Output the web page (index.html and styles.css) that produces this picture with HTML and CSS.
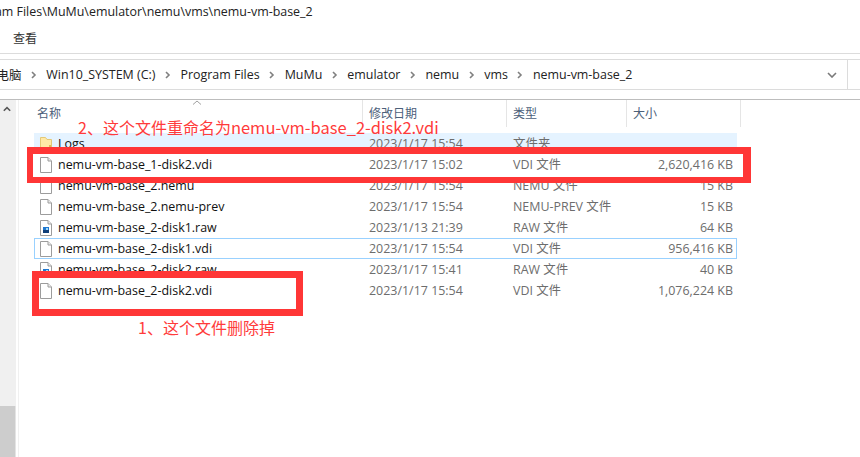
FILE: index.html
```html
<!DOCTYPE html>
<html lang="zh">
<head>
<meta charset="utf-8">
<title>nemu-vm-base_2</title>
<link rel="stylesheet" href="styles.css">
</head>
<body>
<svg class="defs" width="0" height="0">
  <defs>
    <symbol id="file" viewBox="0 0 12 16">
      <path d="M.5.5h7.500l3.500 3.500v11.500H.5z" fill="#fff" stroke="#9c9c9c"/>
      <path d="M8 .5v3.500h3.500" fill="#ececec" stroke="#9c9c9c"/>
    </symbol>
    <symbol id="raw" viewBox="0 0 12 16">
      <path d="M.5.5h7.500l3.500 3.500v11.500H.5z" fill="#fff" stroke="#9c9c9c"/>
      <path d="M8 .5v3.500h3.500" fill="#ececec" stroke="#9c9c9c"/>
      <rect x="3" y="7" width="6" height="6" fill="#1f78d0"/>
      <rect x="3" y="10" width="6" height="3" fill="#0f3f7a"/>
      <rect x="6" y="8" width="2" height="2" fill="#a8dcf8"/>
    </symbol>
    <symbol id="chev" viewBox="0 0 6 8">
      <path d="M1 1l3 3-3 3" fill="none" stroke="#808080" stroke-width="1.6"/>
    </symbol>
  </defs>
</svg>
<div class="window">
  <div class="title"><span class="title-text">Program Files\MuMu\emulator\nemu\vms\nemu-vm-base_2</span></div>
  <div class="ribbon"><span class="tab">查看</span></div>
  <div class="address">
    <div class="crumbs">
      <span>此电脑</span><svg class="chev"><use href="#chev"/></svg>
      <span>Win10_SYSTEM (C:)</span><svg class="chev"><use href="#chev"/></svg>
      <span>Program Files</span><svg class="chev"><use href="#chev"/></svg>
      <span>MuMu</span><svg class="chev"><use href="#chev"/></svg>
      <span>emulator</span><svg class="chev"><use href="#chev"/></svg>
      <span>nemu</span><svg class="chev"><use href="#chev"/></svg>
      <span>vms</span><svg class="chev"><use href="#chev"/></svg>
      <span>nemu-vm-base_2</span>
    </div>
    <div class="drop"><svg width="10" height="6" viewBox="0 0 10 6"><path d="M1 1l4 4 4-4" fill="none" stroke="#7a7a7a" stroke-width="1.6"/></svg></div>
  </div>
  <div class="main">
    <div class="scrollbar">
      <svg class="up" width="8" height="6" viewBox="0 0 8 6"><path d="M.8 4.800L4 1.600l3.200 3.200" fill="none" stroke="#555" stroke-width="1.500"/></svg>
      <div class="thumb"></div>
    </div>
    <div class="list">
      <div class="head">
        <div class="hcell">名称<svg class="sort" width="10" height="5" viewBox="0 0 10 5"><path d="M1 4.500L5 1l4 3.500" fill="none" stroke="#a0a0a0"/></svg></div>
        <div class="hcell">修改日期</div>
        <div class="hcell">类型</div>
        <div class="hcell">大小</div>
      </div>
      <div class="rows">
        <div class="row hover">
          <span class="name"><svg class="ico" viewBox="0 0 12 16"><path d="M.5 1.500h5l1.500 2h4.500v12H.5z" fill="#ffe9a6" stroke="#e3c878"/><rect x="9" y="9" width="2" height="2" fill="#d9b95c"/></svg>Logs</span>
          <span class="date">2023/1/17 15:54</span><span class="type">文件夹</span><span class="size"></span>
        </div>
        <div class="row">
          <span class="name"><svg class="ico"><use href="#file"/></svg>nemu-vm-base_1-disk2.vdi</span>
          <span class="date">2023/1/17 15:02</span><span class="type">VDI 文件</span><span class="size">2,620,416 KB</span>
        </div>
        <div class="row">
          <span class="name"><svg class="ico"><use href="#file"/></svg>nemu-vm-base_2.nemu</span>
          <span class="date">2023/1/17 15:54</span><span class="type">NEMU 文件</span><span class="size">15 KB</span>
        </div>
        <div class="row">
          <span class="name"><svg class="ico"><use href="#file"/></svg>nemu-vm-base_2.nemu-prev</span>
          <span class="date">2023/1/17 15:54</span><span class="type">NEMU-PREV 文件</span><span class="size">15 KB</span>
        </div>
        <div class="row">
          <span class="name"><svg class="ico"><use href="#raw"/></svg>nemu-vm-base_2-disk1.raw</span>
          <span class="date">2023/1/13 21:39</span><span class="type">RAW 文件</span><span class="size">64 KB</span>
        </div>
        <div class="row focus">
          <span class="name"><svg class="ico"><use href="#file"/></svg>nemu-vm-base_2-disk1.vdi</span>
          <span class="date">2023/1/17 15:54</span><span class="type">VDI 文件</span><span class="size">956,416 KB</span>
        </div>
        <div class="row">
          <span class="name"><svg class="ico"><use href="#raw"/></svg>nemu-vm-base_2-disk2.raw</span>
          <span class="date">2023/1/17 15:41</span><span class="type">RAW 文件</span><span class="size">40 KB</span>
        </div>
        <div class="row">
          <span class="name"><svg class="ico"><use href="#file"/></svg>nemu-vm-base_2-disk2.vdi</span>
          <span class="date">2023/1/17 15:54</span><span class="type">VDI 文件</span><span class="size">1,076,224 KB</span>
        </div>
      </div>
    </div>
  </div>
  <div class="box box-top"></div>
  <div class="box box-bottom"></div>
  <div class="note note-top">2、这个文件重命名为<span class="latin">nemu-vm-base_2-disk2.vdi</span></div>
  <div class="note note-bottom">1、这个文件删除掉</div>
</div>
</body>
</html>
```
FILE: styles.css
```css
* { box-sizing: border-box; }
html, body { margin: 0; padding: 0; background: #fff; }
body { width: 860px; height: 457px; overflow: hidden; font-family: "Open Sans", "Noto Sans CJK SC", sans-serif; font-size: 12.45px; color: #1a1a1a; }
.defs { position: absolute; }
.window { position: relative; width: 860px; height: 457px; overflow: hidden; display: flex; flex-direction: column; }

.title { height: 23px; line-height: 23px; white-space: nowrap; overflow: hidden; color: #222; }
.title-text { display: inline-block; margin-left: -37px; }
.ribbon { height: 31px; padding: 7px 0 0 13px; line-height: 18px; border-bottom: 1px solid #dcdcdc; }
.tab { color: #333; font-size: 12px; }

.address { height: 31px; margin-top: 5px; display: flex; border-top: 1px solid #dcdcdc; border-bottom: 1px solid #dcdcdc; }
.crumbs { flex: none; width: 832px; display: flex; align-items: center; gap: 9px; white-space: nowrap; overflow: hidden; margin-left: -16px; color: #222; }
.chev { width: 6px; height: 8px; flex: none; margin: 0 .5px; }
.drop { width: 32px; flex: none; display: flex; align-items: center; justify-content: center; border-right: 1px solid #dcdcdc; }

.main { flex: 1; margin-top: 9px; border-top: 1px solid #bdbdbd; display: flex; min-height: 0; }
.scrollbar { width: 16px; background: #f0f0f0; display: flex; flex-direction: column; align-items: center; justify-content: space-between; padding-top: 6px; }
.up { margin-left: -2px; }
.thumb { width: 16px; height: 51px; background: #cdcdcd; border-right: 1px solid #e4e4e4; }
.list { flex: 1; margin-left: 2px; border-left: 1px solid #f0f0f0; padding-left: 15px; }

.head { display: grid; grid-template-columns: 329px 144px 120px 114px; height: 27px; }
.hcell { position: relative; padding-left: 6px; line-height: 27px; color: #4c607a; border-right: 1px solid #e5e5e5; font-size: 12px; }
.hcell:nth-child(1) { padding-left: 3px; }
.sort { position: absolute; left: 158px; top: 0; }

.rows { margin-top: 6px; width: 703px; }
.row { display: grid; grid-template-columns: 329px 144px 120px 106px; height: 21px; line-height: 21px; align-items: center; white-space: nowrap; }
.hover { background: #e5f3ff; }
.focus { box-shadow: inset 0 0 0 1px #99d1ff; }
.name { display: flex; align-items: center; gap: 6px; padding-left: 6px; color: #111; }
.ico { width: 12px; height: 16px; flex: none; }
.date, .type { padding-left: 6px; color: #6d6d6d; }
.size { text-align: right; color: #6d6d6d; }

.box { position: absolute; border: 7px solid #ff3636; }
.box-top { left: 27px; top: 147px; width: 724px; height: 36px; border-width: 7px 8px 6px 6px; }
.box-bottom { left: 32px; top: 271px; width: 271px; height: 45px; }
.note { position: absolute; color: #ff3b3b; font-size: 16px; line-height: 22px; white-space: nowrap; font-family: "Noto Sans CJK SC", "Noto Sans", sans-serif; }
.latin { font-size: 16.5px; }
.note-top { left: 78px; top: 116px; }
.note-bottom { left: 138px; top: 316px; }
```
